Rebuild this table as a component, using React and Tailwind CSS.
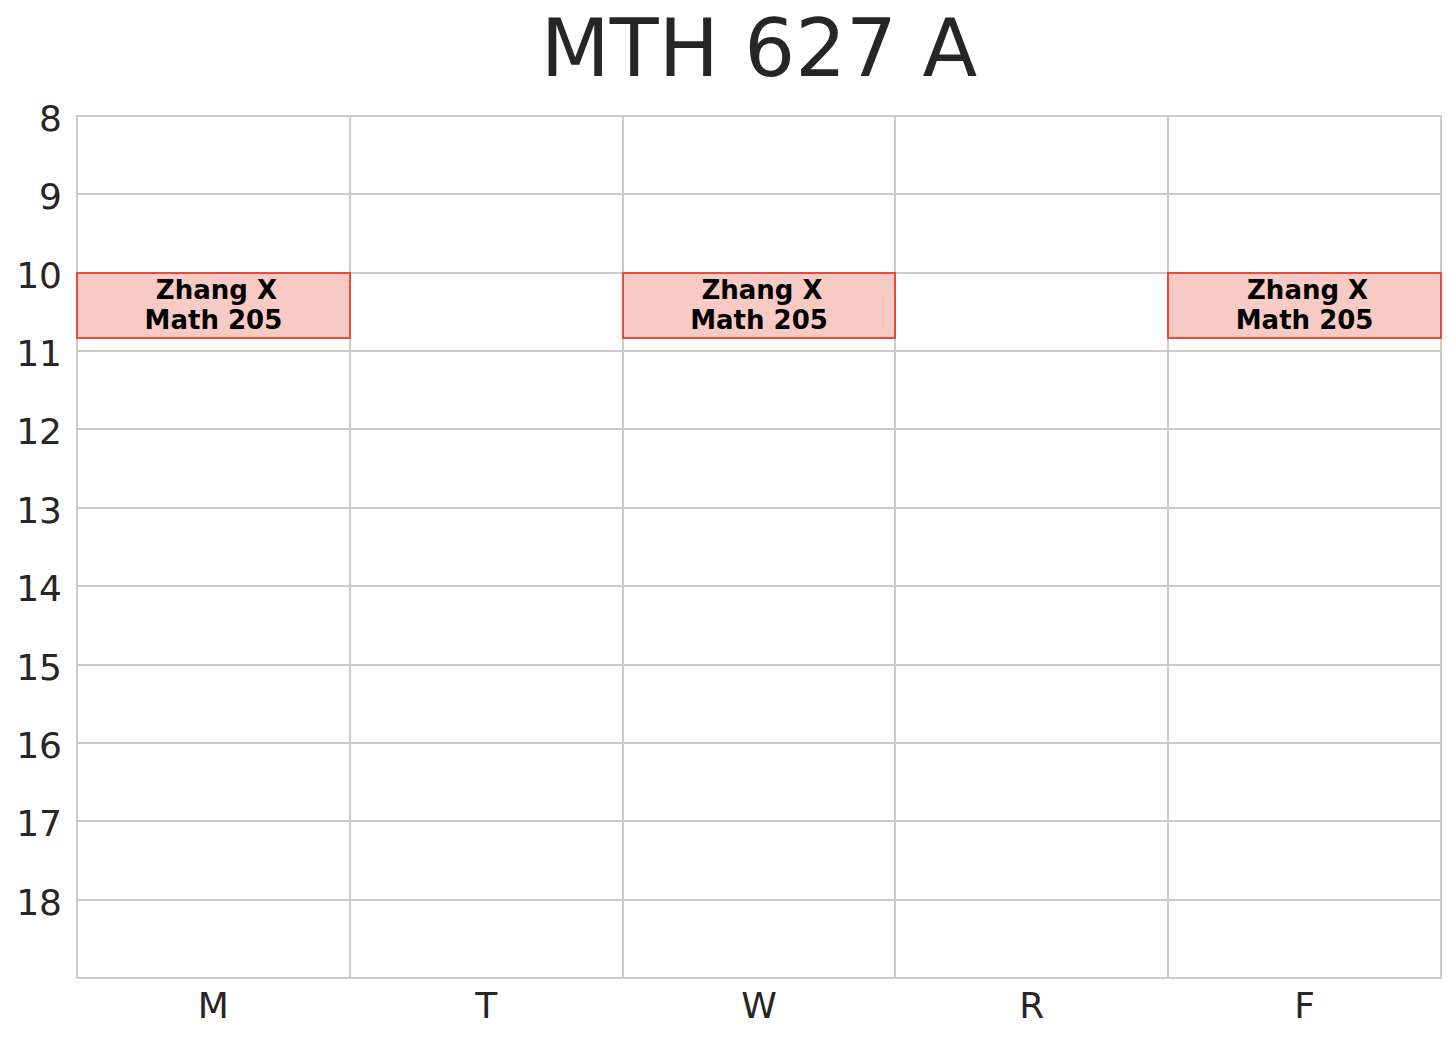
const days = ['M', 'T', 'W', 'R', 'F'];
const hours = [8, 9, 10, 11, 12, 13, 14, 15, 16, 17, 18];

// one block per meeting: day column, start hour
const events = [
  { day: 0, hour: 10, who: 'Zhang X', room: 'Math 205' },
  { day: 2, hour: 10, who: 'Zhang X', room: 'Math 205' },
  { day: 4, hour: 10, who: 'Zhang X', room: 'Math 205' },
];

const EventBlock = ({ who, room }) => (
  <div className="absolute -top-[2px] -left-[2px] -right-[2px] h-[67.3px] z-10 border-2 border-[#e74c3c] bg-[#f8cac4] flex flex-col items-center justify-center text-[26px] leading-[30px] font-bold text-black">
    <span className="pl-[6px]">{who}</span>
    <span>{room}</span>
  </div>
);

export default function App() {
  return (
    <div className="w-[1456px] h-[1040px] bg-white font-['DejaVu_Sans',sans-serif] text-[#262626] overflow-hidden">
      <div className="flex">
        {/* Y axis labels */}
        <div className="w-[76px] shrink-0 flex flex-col pt-[116px]">
          {hours.map((h) => (
            <div key={h} className="h-[78.36px] flex justify-end pr-[14px]">
              <span className="text-[36px] leading-[36px] -mt-[15px]">{h}</span>
            </div>
          ))}
        </div>

        <div className="w-[1366px] shrink-0 flex flex-col">
          {/* Title */}
          <div className="h-[115px] pt-[9px] text-center text-[80px] leading-[80px]">MTH 627 A</div>

          {/* Grid */}
          <div className="h-[864px] border-2 border-[#cccccc] bg-[#cccccc] grid grid-cols-5 grid-rows-11 gap-[2px]">
            {hours.map((h) =>
              days.map((d, di) => {
                const ev = events.find((e) => e.day === di && e.hour === h);
                return (
                  <div key={`${h}-${d}`} className="relative bg-white">
                    {ev && <EventBlock who={ev.who} room={ev.room} />}
                  </div>
                );
              })
            )}
          </div>

          {/* X axis labels */}
          <div className="grid grid-cols-5 gap-[2px] px-[2px] mt-[9px]">
            {days.map((d) => (
              <div key={d} className="text-center text-[36px] leading-[36px]">{d}</div>
            ))}
          </div>
        </div>
      </div>
    </div>
  );
}
